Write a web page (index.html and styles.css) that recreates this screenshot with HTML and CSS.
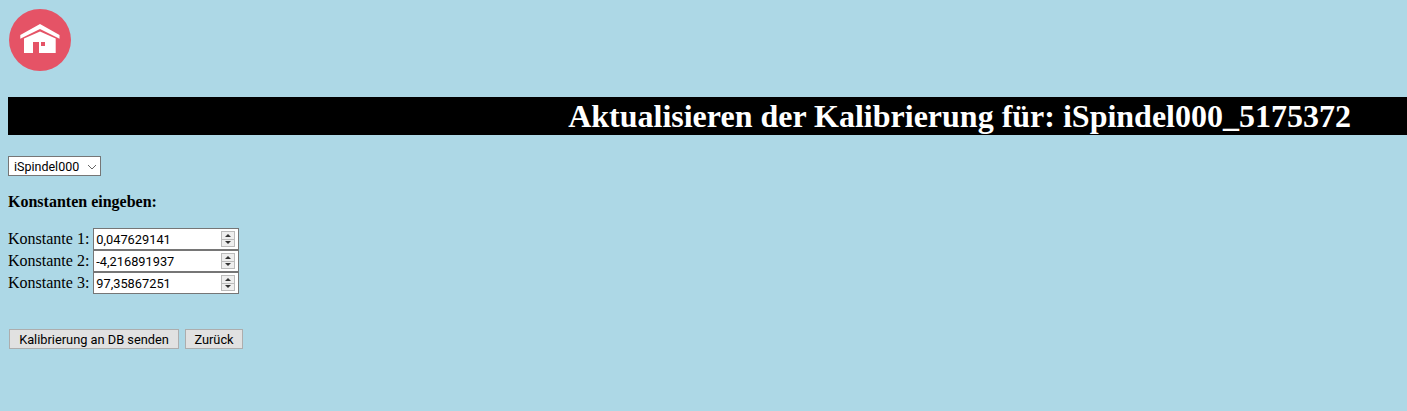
FILE: index.html
```html
<!DOCTYPE html>
<html lang="de">
  <head>
    <meta charset="UTF-8" />
    <meta name="viewport" content="width=device-width, initial-scale=1.0" />
    <title>Kalibrierung</title>
    <link rel="stylesheet" href="styles.css">
  </head>
  <body>
    <a class="home" href="#">
      <svg viewBox="0 0 62 62" width="62" height="62">
        <circle cx="31" cy="31" r="31" fill="#e55366" />
        <path d="M31 15 L50.500 26 V29.700 L31 20 L11.300 29.700 V26 Z" fill="#fff" />
        <path d="M31 22.500 L46.700 29.500 V44 H30 V33 H24 V44 H15 V29.500 Z" fill="#fff" />
        <rect x="32" y="33" width="4" height="4" fill="#e55366" />
      </svg>
    </a>

    <h1 class="title">Aktualisieren der Kalibrierung für: iSpindel000_5175372</h1>

    <form>
      <select class="spindle">
        <option>iSpindel000</option>
      </select>

      <p class="hint"><strong>Konstanten eingeben:</strong></p>

      <div class="constants">
        <div class="row">
          <label>Konstante 1:</label>
          <span class="num">
            <input type="text" value="0,047629141" />
            <span class="spin"><i class="up"></i><i class="down"></i></span>
          </span>
        </div>
        <div class="row">
          <label>Konstante 2:</label>
          <span class="num">
            <input type="text" value="-4,216891937" />
            <span class="spin"><i class="up"></i><i class="down"></i></span>
          </span>
        </div>
        <div class="row">
          <label>Konstante 3:</label>
          <span class="num">
            <input type="text" value="97,35867251" />
            <span class="spin"><i class="up"></i><i class="down"></i></span>
          </span>
        </div>
      </div>

      <div class="actions">
        <button type="button" class="send">Kalibrierung an DB senden</button>
        <button type="button" class="back">Zurück</button>
      </div>
    </form>
  </body>
</html>
```

FILE: styles.css
```css
body {
  margin: 8px 0 0 8px;
  background-color: #add8e6;
  font-family: "Liberation Serif", serif;
  font-size: 16px;
  color: #000;
}

.home {
  display: block;
  width: 62px;
  height: 62px;
  margin: 1px 0 0 1px;
}

.home svg {
  display: block;
}

.title {
  display: block;
  margin: 26px 0 0 0;
  height: 38px;
  padding-right: 56px;
  background-color: #000;
  color: #fff;
  font-size: 32px;
  line-height: 38px;
  text-align: right;
}

.spindle {
  display: block;
  box-sizing: border-box;
  width: 93px;
  height: 20px;
  margin-top: 21px;
  padding: 0 0 0 5px;
  border: 1px solid #767676;
  border-radius: 0;
  appearance: none;
  background: #fff url("data:image/svg+xml,%3Csvg xmlns='http://www.w3.org/2000/svg' width='10' height='6'%3E%3Cpath d='M1 1l4 4 4-4' fill='none' stroke='%23666'/%3E%3C/svg%3E") no-repeat 78px 7px;
  font-family: Roboto, sans-serif;
  font-size: 12.5px;
  color: #000;
}

.hint {
  margin: 17px 0 0 0;
  line-height: 18px;
}

.constants {
  margin-top: 17px;
}

.row {
  display: flex;
  align-items: center;
  gap: 4px;
  height: 22px;
}

.num {
  display: flex;
  align-items: center;
  box-sizing: border-box;
  width: 146px;
  height: 22px;
  border: 1px solid #767676;
  background-color: #fff;
}

.num input {
  flex: 1;
  min-width: 0;
  height: 18px;
  padding: 0 0 0 2px;
  border: 0;
  outline: 0;
  background: transparent;
  font-family: Roboto, sans-serif;
  font-size: 12.8px;
  color: #000;
}

.spin {
  display: flex;
  flex-direction: column;
  box-sizing: border-box;
  width: 14px;
  height: 16px;
  margin-right: 3px;
  border: 1px solid #bbb;
  background-color: #eee;
}

.spin i {
  flex: 1;
  display: flex;
  align-items: center;
  justify-content: center;
}

.spin .down {
  border-top: 1px solid #bbb;
}

.up::before,
.down::before {
  content: "";
  border-left: 3px solid transparent;
  border-right: 3px solid transparent;
}

.up::before {
  border-bottom: 3px solid #333;
}

.down::before {
  border-top: 3px solid #333;
}

.actions {
  display: flex;
  gap: 6px;
  margin: 35px 0 0 1px;
}

.actions button {
  box-sizing: border-box;
  height: 20px;
  padding: 0;
  border: 1px solid #adadad;
  border-radius: 0;
  background-color: #e1e1e1;
  font-family: Roboto, sans-serif;
  font-size: 12.8px;
  color: #000;
}

.send {
  width: 170px;
}

.back {
  width: 58px;
}
```
